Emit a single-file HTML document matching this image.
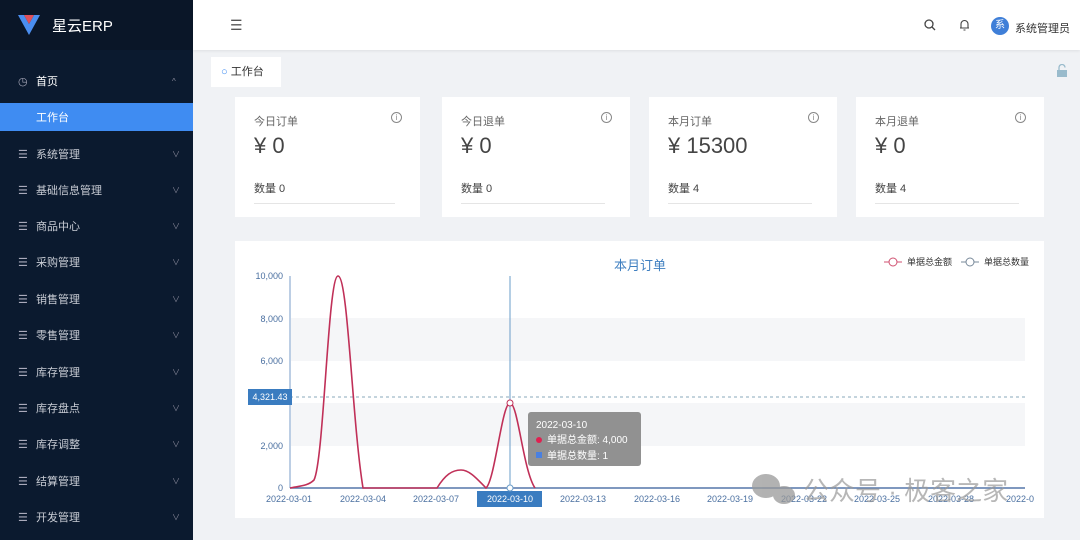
<!DOCTYPE html><html><head><meta charset="utf-8"><style>
*{margin:0;padding:0;box-sizing:border-box}
body{width:1080px;height:540px;overflow:hidden;background:#f0f2f5;font-family:"Liberation Sans","Noto Sans CJK SC",sans-serif;position:relative}
.sb{position:absolute;left:0;top:0;width:193px;height:540px;background:#0b1a2f}
.logo{height:50px;background:#0a1628;display:flex;align-items:center;padding-left:18px;color:#fff;font-size:15px}
.mi{position:absolute;left:0;width:193px;height:28px;display:flex;align-items:center;color:#c8ccd4;font-size:11px}
.mi .ic{position:absolute;left:18px;font-size:11px;color:#aab}
.mi .t{position:absolute;left:36px}
.mi .ar{position:absolute;left:172px;font-size:8px;color:#889}
.hd{position:absolute;left:193px;top:0;right:0;height:50px;background:#fff;box-shadow:0 1px 3px rgba(0,0,0,.08)}
.card{position:absolute;top:97px;height:120px;background:#fff}
.card .l{position:absolute;left:19px;top:16px;font-size:11px;color:#666}
.card .i{position:absolute;right:18px;top:15px;width:11px;height:11px;border:1px solid #888;border-radius:50%;font-size:8px;text-align:center;line-height:9px;color:#888}
.card .v{position:absolute;left:19px;top:36px;font-size:22px;color:#444}
.card .n{position:absolute;left:19px;top:83px;font-size:11px;color:#444}
.card .hr{position:absolute;left:19px;right:25px;top:106px;border-top:1px solid #e5e5e5}
</style></head><body>
<div class="sb">
<div class="logo"><svg width="22" height="20" viewBox="0 0 22 20"><path d="M0 0L11 20L22 0L16 0L11 9L6 0Z" fill="#4a8ef0"/><path d="M6 0L11 9L16 0Z" fill="#e0505a"/></svg><span style="margin-left:12px">星云ERP</span></div>
<div class="mi" style="top:67px;color:#fff"><span class="ic">◷</span><span class="t">首页</span><span class="ar">^</span></div>
<div class="mi" style="top:103px;background:#3f8cf2;color:#fff"><span class="t">工作台</span></div>
<div class="mi" style="top:140px"><span class="ic">☰</span><span class="t">系统管理</span><span class="ar">∨</span></div>
<div class="mi" style="top:176px"><span class="ic">☰</span><span class="t">基础信息管理</span><span class="ar">∨</span></div>
<div class="mi" style="top:212px"><span class="ic">☰</span><span class="t">商品中心</span><span class="ar">∨</span></div>
<div class="mi" style="top:248px"><span class="ic">☰</span><span class="t">采购管理</span><span class="ar">∨</span></div>
<div class="mi" style="top:285px"><span class="ic">☰</span><span class="t">销售管理</span><span class="ar">∨</span></div>
<div class="mi" style="top:321px"><span class="ic">☰</span><span class="t">零售管理</span><span class="ar">∨</span></div>
<div class="mi" style="top:358px"><span class="ic">☰</span><span class="t">库存管理</span><span class="ar">∨</span></div>
<div class="mi" style="top:394px"><span class="ic">☰</span><span class="t">库存盘点</span><span class="ar">∨</span></div>
<div class="mi" style="top:430px"><span class="ic">☰</span><span class="t">库存调整</span><span class="ar">∨</span></div>
<div class="mi" style="top:467px"><span class="ic">☰</span><span class="t">结算管理</span><span class="ar">∨</span></div>
<div class="mi" style="top:503px"><span class="ic">☰</span><span class="t">开发管理</span><span class="ar">∨</span></div>
</div>
<div class="hd">
<div style="position:absolute;left:37px;top:17px;font-size:14px;color:#555">☰</div>
<svg style="position:absolute;left:731px;top:19px" width="12" height="12"><circle cx="5" cy="5" r="4" fill="none" stroke="#444" stroke-width="1.3"/><path d="M8 8L11 11" stroke="#444" stroke-width="1.3"/></svg>
<svg style="position:absolute;left:766px;top:19px" width="11" height="12"><path d="M2 9V5a3.5 3.5 0 0 1 7 0v4H1h9M4.5 11h2" fill="none" stroke="#444" stroke-width="1.1"/></svg>
<div style="position:absolute;left:798px;top:17px;width:18px;height:18px;border-radius:50%;background:#3f7fd8;color:#fff;font-size:10px;text-align:center;line-height:18px">系</div>
<div style="position:absolute;left:822px;top:20px;font-size:11px;color:#333">系统管理员</div>
</div>
<div style="position:absolute;left:211px;top:57px;width:70px;height:30px;background:#fff;font-size:11px;color:#3f8cf2;line-height:30px;padding-left:10px">○ <span style="color:#333">工作台</span></div>
<svg style="position:absolute;left:1056px;top:64px" width="12" height="13"><rect x="1" y="6" width="10" height="7" fill="#9bc"/><path d="M3 6V3.5a3 3 0 0 1 6 0" fill="none" stroke="#9bc" stroke-width="1.3"/></svg>
<div class="card" style="left:235px;width:185px"><div class="l">今日订单</div><div class="i">i</div><div class="v">¥ 0</div><div class="n">数量 0</div><div class="hr"></div></div>
<div class="card" style="left:442px;width:188px"><div class="l">今日退单</div><div class="i">i</div><div class="v">¥ 0</div><div class="n">数量 0</div><div class="hr"></div></div>
<div class="card" style="left:649px;width:188px"><div class="l">本月订单</div><div class="i">i</div><div class="v">¥ 15300</div><div class="n">数量 4</div><div class="hr"></div></div>
<div class="card" style="left:856px;width:188px"><div class="l">本月退单</div><div class="i">i</div><div class="v">¥ 0</div><div class="n">数量 4</div><div class="hr"></div></div>
<div style="position:absolute;left:235px;top:241px;width:809px;height:277px;background:#fff"></div>
<svg style="position:absolute;left:0;top:0" width="1080" height="540" font-family="Liberation Sans,Noto Sans CJK SC,sans-serif">
<rect x="291" y="318" width="734" height="43" fill="#f5f6f8"/><rect x="291" y="403" width="734" height="43" fill="#f5f6f8"/>
<text x="640" y="270" font-size="13" fill="#3f7fc0" text-anchor="middle">本月订单</text>
<g font-size="9" fill="#333"><path d="M884 262h18" stroke="#d05070"/><circle cx="893" cy="262" r="4" fill="#fff" stroke="#d05070"/><text x="907" y="265">单据总金额</text>
<path d="M961 262h18" stroke="#789"/><circle cx="970" cy="262" r="4" fill="#fff" stroke="#789"/><text x="984" y="265">单据总数量</text></g>
<g font-size="9" fill="#4a6fa0" text-anchor="end"><text x="283" y="279">10,000</text><text x="283" y="322">8,000</text><text x="283" y="364">6,000</text><text x="283" y="449">2,000</text><text x="283" y="491">0</text></g>
<path d="M290 276V488" stroke="#7a9cc8"/><path d="M290 488H1025" stroke="#5577aa" stroke-width="1.5"/>
<path d="M290 397H1025" stroke="#8ab" stroke-dasharray="3,3"/>
<rect x="248" y="389" width="44" height="16" fill="#3a7cc0"/><text x="270" y="400" font-size="9" fill="#fff" text-anchor="middle">4,321.43</text>
<path d="M510 276V488" stroke="#6a9cc8"/>
<g font-size="9" fill="#4a6fa0" text-anchor="middle"><text x="289" y="502">2022-03-01</text><text x="363" y="502">2022-03-04</text><text x="436" y="502">2022-03-07</text><text x="583" y="502">2022-03-13</text><text x="657" y="502">2022-03-16</text><text x="730" y="502">2022-03-19</text><text x="804" y="502">2022-03-22</text><text x="877" y="502">2022-03-25</text><text x="951" y="502">2022-03-28</text><text x="1020" y="502">2022-0</text></g>
<rect x="477" y="491" width="65" height="16" fill="#3a7cc0"/><text x="510" y="502" font-size="9" fill="#fff" text-anchor="middle">2022-03-10</text>
<path d="M290 488C300 486 308 486 314 480C324 460 328 276 338 276C348 276 352 420 363 488H437C445 475 452 470 461 470C470 470 478 480 486 488C495 480 502 403 510 403C518 403 523 470 535 488" fill="none" stroke="#c03058" stroke-width="1.6"/>
<circle cx="510" cy="403" r="3" fill="#fff" stroke="#c03058"/><circle cx="510" cy="488" r="3" fill="#fff" stroke="#6a9cc8"/>
<rect x="528" y="412" width="113" height="54" rx="3" fill="#888" opacity=".92"/>
<g font-size="10" fill="#fff"><text x="536" y="428">2022-03-10</text><circle cx="539" cy="440" r="3" fill="#e02050"/><text x="547" y="443">单据总金额: 4,000</text><rect x="536" y="452" width="6" height="6" fill="#4a80e0"/><text x="547" y="459">单据总数量: 1</text></g>
<g opacity=".75"><ellipse cx="766" cy="486" rx="14" ry="12" fill="#999"/><ellipse cx="784" cy="495" rx="11" ry="9" fill="#999"/></g>
<text x="803" y="500" font-size="26" fill="#999" opacity=".7">公众号 · 极客之家</text>
</svg>
</body></html>
